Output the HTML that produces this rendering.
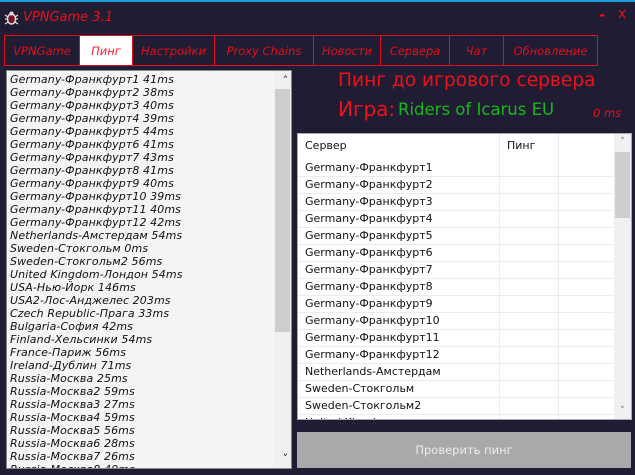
<!DOCTYPE html>
<html><head><meta charset="utf-8"><style>
*{margin:0;padding:0;box-sizing:border-box}
body{width:635px;height:475px;background:#201c33;position:relative;overflow:hidden;font-family:"DejaVu Sans","Liberation Sans",sans-serif}
.abs{position:absolute}
.top{left:0;top:0;width:635px;height:2px;background:#1a9fd8}
.title{left:23px;top:10px;color:#e8101a;font-style:italic;font-size:13px}
.tabs{left:4px;top:35px;height:31px;width:594px;border:1px solid #e0101a;display:flex}
.tab{border-right:1px solid #e0101a;color:#e0101a;font-style:italic;font-size:11.5px;display:flex;align-items:center;justify-content:center;height:29px}
.tab:last-child{border-right:none}
.tab.on{background:#fff;color:#ff2030}
.lb{left:6px;top:70px;width:286px;height:399px;background:#f4f4f4;border:1px solid #888;overflow:hidden}
.lb div{font-style:italic;font-size:11px;line-height:13px;color:#111;padding-left:3px;white-space:nowrap;letter-spacing:0.1px}
.sb{position:absolute;right:0;top:0;width:17px;height:100%;background:#f0f0f0}
.th{position:absolute;left:1px;width:15px;background:#cdcdcd}
.arr{position:absolute;left:0;width:17px;text-align:center;font-size:9px;color:#606060}
.h1{left:338px;top:70px;color:#f01018;font-size:18.6px}
.h2{left:338px;top:97px;color:#f01018;font-size:20px}
.h3{left:398px;top:100px;color:#17b817;font-size:16.5px}
.ms{left:593px;top:106px;color:#e8101a;font-style:italic;font-size:11.5px}
.tb{left:297px;top:133px;width:335px;height:287px;background:#fff;border:1px solid #aaa;overflow:hidden}
.row{display:flex;height:17px;border-bottom:1px solid #ececec;font-size:11px;line-height:16px;color:#111}
.row span{display:block}
.c1{width:202px;padding-left:7px;border-right:1px solid #ececec}
.c2{width:59px;padding-left:7px;border-right:1px solid #ececec}
.btn{left:297px;top:432px;width:334px;height:36px;background:#a9a9a9;color:#ececec;font-size:11.5px;text-align:center;line-height:36px}
</style></head><body>
<div class="abs top"></div>
<svg class="abs" style="left:4px;top:10px" width="15" height="16" viewBox="0 0 15 16"><ellipse cx="7.5" cy="9" rx="4" ry="5" fill="#7a1020" stroke="#ddd" stroke-width="1.5"/><circle cx="7.5" cy="3.5" r="2" fill="#ddd"/><path d="M1 5l3 2M14 5l-3 2M1 9h2.5M14 9h-2.5M1 14l3-2M14 14l-3-2" stroke="#ddd" stroke-width="1.3"/></svg>
<div class="abs title">VPNGame 3.1</div>
<div class="abs" style="left:599px;top:6px;color:#e8101a;font-size:15px;font-weight:bold">-</div>
<div class="abs" style="left:618px;top:6px;color:#e8101a;font-size:14px">x</div>
<div class="abs tabs">
<div class="tab" style="width:75px">VPNGame</div>
<div class="tab on" style="width:53px">Пинг</div>
<div class="tab" style="width:82px">Настройки</div>
<div class="tab" style="width:99px">Proxy Chains</div>
<div class="tab" style="width:67px">Новости</div>
<div class="tab" style="width:69px">Сервера</div>
<div class="tab" style="width:54px">Чат</div>
<div class="tab" style="width:93px">Обновление</div>
</div>
<div class="abs lb"><div style="height:2px;padding:0"></div>
<div>Germany-Франкфурт1 41ms</div><div>Germany-Франкфурт2 38ms</div><div>Germany-Франкфурт3 40ms</div><div>Germany-Франкфурт4 39ms</div><div>Germany-Франкфурт5 44ms</div><div>Germany-Франкфурт6 41ms</div><div>Germany-Франкфурт7 43ms</div><div>Germany-Франкфурт8 41ms</div><div>Germany-Франкфурт9 40ms</div><div>Germany-Франкфурт10 39ms</div><div>Germany-Франкфурт11 40ms</div><div>Germany-Франкфурт12 42ms</div><div>Netherlands-Амстердам 54ms</div><div>Sweden-Стокгольм 0ms</div><div>Sweden-Стокгольм2 56ms</div><div>United Kingdom-Лондон 54ms</div><div>USA-Нью-Йорк 146ms</div><div>USA2-Лос-Анджелес 203ms</div><div>Czech Republic-Прага 33ms</div><div>Bulgaria-София 42ms</div><div>Finland-Хельсинки 54ms</div><div>France-Париж 56ms</div><div>Ireland-Дублин 71ms</div><div>Russia-Москва 25ms</div><div>Russia-Москва2 59ms</div><div>Russia-Москва3 27ms</div><div>Russia-Москва4 59ms</div><div>Russia-Москва5 56ms</div><div>Russia-Москва6 28ms</div><div>Russia-Москва7 26ms</div><div>Russia-Москва8 40ms</div>
<div class="sb"><div class="arr" style="top:3px">&#x2C4;</div><div class="th" style="top:18px;height:243px"></div><div class="arr" style="bottom:3px">&#x2C5;</div></div>
</div>
<div class="abs h1">Пинг до игрового сервера</div>
<div class="abs h2">Игра:</div>
<div class="abs h3">Riders of Icarus EU</div>
<div class="abs ms">0 ms</div>
<div class="abs tb">
<div class="row" style="height:26px;line-height:23px;border-bottom:none"><span class="c1">Сервер</span><span class="c2">Пинг</span></div>
<div class="row"><span class="c1">Germany-Франкфурт1</span><span class="c2"></span></div>
<div class="row"><span class="c1">Germany-Франкфурт2</span><span class="c2"></span></div>
<div class="row"><span class="c1">Germany-Франкфурт3</span><span class="c2"></span></div>
<div class="row"><span class="c1">Germany-Франкфурт4</span><span class="c2"></span></div>
<div class="row"><span class="c1">Germany-Франкфурт5</span><span class="c2"></span></div>
<div class="row"><span class="c1">Germany-Франкфурт6</span><span class="c2"></span></div>
<div class="row"><span class="c1">Germany-Франкфурт7</span><span class="c2"></span></div>
<div class="row"><span class="c1">Germany-Франкфурт8</span><span class="c2"></span></div>
<div class="row"><span class="c1">Germany-Франкфурт9</span><span class="c2"></span></div>
<div class="row"><span class="c1">Germany-Франкфурт10</span><span class="c2"></span></div>
<div class="row"><span class="c1">Germany-Франкфурт11</span><span class="c2"></span></div>
<div class="row"><span class="c1">Germany-Франкфурт12</span><span class="c2"></span></div>
<div class="row"><span class="c1">Netherlands-Амстердам</span><span class="c2"></span></div>
<div class="row"><span class="c1">Sweden-Стокгольм</span><span class="c2"></span></div>
<div class="row"><span class="c1">Sweden-Стокгольм2</span><span class="c2"></span></div>
<div class="row"><span class="c1">United Kingdom</span><span class="c2"></span></div>
<div class="sb"><div class="arr" style="top:3px">&#x2C4;</div><div class="th" style="top:18px;height:66px"></div><div class="arr" style="bottom:3px">&#x2C5;</div></div>
</div>
<div class="abs btn">Проверить пинг</div>
</body></html>
